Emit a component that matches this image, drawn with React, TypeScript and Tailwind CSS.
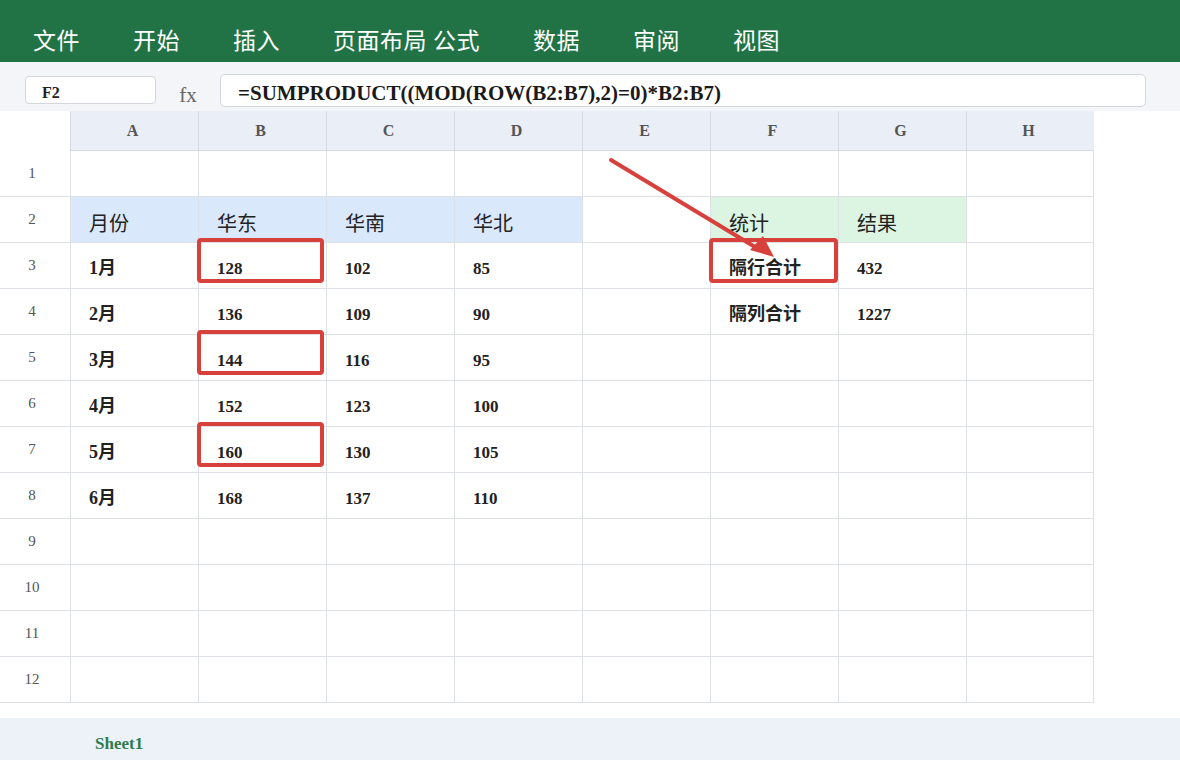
import React from "react";

const tabs = ["文件", "开始", "插入", "页面布局", "公式", "数据", "审阅", "视图"];
const cols = ["A", "B", "C", "D", "E", "F", "G", "H"];

const serif = "font-['Liberation_Serif','Noto_Sans_CJK_SC',serif]";

// rows 1..12, each row is 8 cells (A-H)
const data: string[][] = [
  ["", "", "", "", "", "", "", ""],
  ["月份", "华东", "华南", "华北", "", "统计", "结果", ""],
  ["1月", "128", "102", "85", "", "隔行合计", "432", ""],
  ["2月", "136", "109", "90", "", "隔列合计", "1227", ""],
  ["3月", "144", "116", "95", "", "", "", ""],
  ["4月", "152", "123", "100", "", "", "", ""],
  ["5月", "160", "130", "105", "", "", "", ""],
  ["6月", "168", "137", "110", "", "", "", ""],
  ["", "", "", "", "", "", "", ""],
  ["", "", "", "", "", "", "", ""],
  ["", "", "", "", "", "", "", ""],
  ["", "", "", "", "", "", "", ""],
];

function cellBg(r: number, c: number) {
  if (r === 1 && c <= 3) return "bg-[#dae8fc]";
  if (r === 1 && (c === 5 || c === 6)) return "bg-[#dcf5e3]";
  return "bg-white";
}

export default function App() {
  return (
    <div className={`w-[1180px] h-[760px] bg-white flex flex-col overflow-hidden ${serif}`}>
      {/* Ribbon tabs */}
      <div className="h-[62px] bg-[#217346] flex items-center pl-[33px] pt-[16px]">
        {tabs.map((t) => (
          <div
            key={t}
            className="w-[100px] shrink-0 text-white text-[23px] tracking-[0.5px] font-['Noto_Sans_CJK_SC',sans-serif]"
          >
            {t}
          </div>
        ))}
      </div>

      {/* Formula bar */}
      <div className="h-[49px] bg-[#f3f5f9] flex items-start pt-[12px]">
        <div className="ml-[25px] mt-[2px] w-[131px] h-[28px] bg-white border border-[#d3d6db] rounded-[4px] flex items-center pl-[16px] pt-[5px] text-[16px] font-bold text-[#222]">
          F2
        </div>
        <div className="w-[64px] text-center text-[21px] text-[#666] pt-[6px]">fx</div>
        <div className="w-[926px] h-[33px] bg-white border border-[#d3d6db] rounded-[5px] flex items-center pl-[17px] pt-[7px] text-[21px] font-bold text-[#1a1a1a]">
          =SUMPRODUCT((MOD(ROW(B2:B7),2)=0)*B2:B7)
        </div>
      </div>

      {/* Grid */}
      <div className="relative">
        <div className="grid grid-cols-[70px_repeat(8,128px)] grid-rows-[40px_repeat(12,46px)] w-fit">
          <div className="bg-white" />
          {cols.map((c) => (
            <div
              key={c}
              className="bg-[#e9eef7] border-l border-b border-[#d6dbe3] flex items-center justify-center pr-[4px] text-[16px] font-bold text-[#555]"
            >
              {c}
            </div>
          ))}
          {data.map((row, r) => (
            <React.Fragment key={r}>
              <div className="border-b border-[#dde1e6] flex items-center justify-center pr-[6px] text-[15px] text-[#555]">
                {r + 1}
              </div>
              {row.map((v, c) => (
                <div
                  key={c}
                  className={`${cellBg(r, c)} border-l border-b border-[#dde1e6] ${c === 7 ? "border-r" : ""} flex items-center pl-[18px] pt-[6px] font-bold text-[#222] ${
                    r === 1 ? "text-[20px] font-normal font-['Noto_Sans_CJK_SC',sans-serif]" : "text-[17px]"
                  } ${r > 1 && (c === 0 || c === 5) ? "text-[18px]" : ""}`}
                >
                  {v}
                </div>
              ))}
            </React.Fragment>
          ))}
        </div>

        {/* Highlight boxes */}
        <div className="absolute left-[197px] top-[127px] w-[127px] h-[45px] border-[4px] border-[#d8403b] rounded-[4px]" />
        <div className="absolute left-[197px] top-[219px] w-[127px] h-[45px] border-[4px] border-[#d8403b] rounded-[4px]" />
        <div className="absolute left-[197px] top-[311px] w-[127px] h-[45px] border-[4px] border-[#d8403b] rounded-[4px]" />
        <div className="absolute left-[709px] top-[127px] w-[129px] h-[45px] border-[4px] border-[#d8403b] rounded-[4px]" />

        {/* Arrow */}
        <svg className="absolute left-0 top-0 pointer-events-none" width="1180" height="600">
          <line x1="611" y1="49" x2="760" y2="139" stroke="#d8403b" strokeWidth="4" strokeLinecap="round" />
          <polygon points="774,146 750,139 763,125" fill="#d8403b" />
        </svg>
      </div>

      <div className="flex-1" />

      {/* Sheet tabs */}
      <div className="h-[42px] bg-[#edf1f8] flex items-center pl-[95px] pt-[10px]">
        <span className="text-[17px] font-bold text-[#2e7d4f]">Sheet1</span>
      </div>
    </div>
  );
}
